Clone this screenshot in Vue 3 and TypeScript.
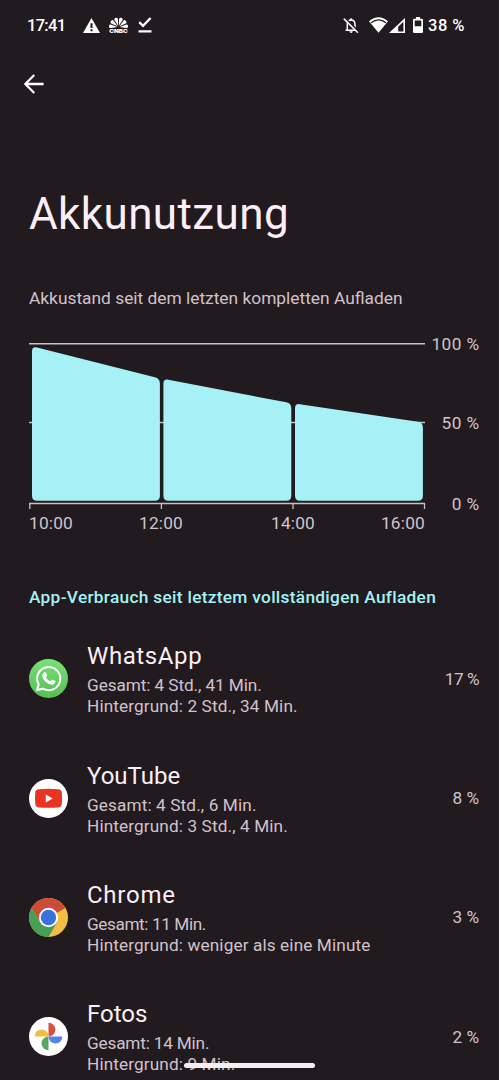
<script setup lang="ts">
interface AppUsage {
  id: string
  name: string
  total: string
  background: string
  share: string
}

const apps: AppUsage[] = [
  { id: 'whatsapp', name: 'WhatsApp', total: 'Gesamt: 4 Std., 41 Min.', background: 'Hintergrund: 2 Std., 34 Min.', share: '17 %' },
  { id: 'youtube', name: 'YouTube', total: 'Gesamt: 4 Std., 6 Min.', background: 'Hintergrund: 3 Std., 4 Min.', share: '8 %' },
  { id: 'chrome', name: 'Chrome', total: 'Gesamt: 11 Min.', background: 'Hintergrund: weniger als eine Minute', share: '3 %' },
  { id: 'fotos', name: 'Fotos', total: 'Gesamt: 14 Min.', background: 'Hintergrund: 9 Min.', share: '2 %' },
]

const hours = ['10:00', '12:00', '14:00', '16:00']
const levels = ['100 %', '50 %', '0 %']

interface Slot {
  x: number
  left: number
  right: number
}

const slots: Slot[] = [
  { x: 3, left: 6.3, right: 38.5 },
  { x: 134.4, left: 38.8, right: 63.3 },
  { x: 266, left: 63.4, right: 82.6 },
]
const slotWidth = 127.9
const base = 160.7

// Trapezoid with rounded corners; the top edge slopes from left to right.
function slotPath(s: Slot): string {
  const r = 5
  const x2 = s.x + slotWidth
  const slope = ((s.right - s.left) / slotWidth) * r
  return [
    `M${s.x} ${s.left + r}`,
    `Q${s.x} ${s.left} ${s.x + r} ${s.left + slope}`,
    `L${x2 - r} ${s.right - slope}`,
    `Q${x2} ${s.right} ${x2} ${s.right + r}`,
    `V${base - r}`,
    `Q${x2} ${base} ${x2 - r} ${base}`,
    `H${s.x + r}`,
    `Q${s.x} ${base} ${s.x} ${base - r}Z`,
  ].join('')
}

const feathers = [-85, -51, -17, 17, 51, 85]
</script>

<template>
  <main class="screen">
    <header class="status">
      <span class="clock">17:41</span>
      <svg class="warn" viewBox="0 0 17 15" width="17" height="15">
        <path fill="#fff" fill-rule="evenodd" d="M8.5 0 17 15H0ZM7.5 5.3v4.6h2V5.3Zm0 6v1.9h2v-1.9Z" />
      </svg>
      <svg class="peacock" viewBox="0 0 19 16" width="19" height="16">
        <path v-for="a in feathers" :key="a" fill="#fff" d="M9.5 8.8 7.8 2.6a1.75 1.75 0 1 1 3.4 0Z" :transform="`rotate(${a} 9.5 10)`" />
        <text x="9.5" y="15.6" text-anchor="middle" class="cnbc" textLength="18.5" lengthAdjust="spacingAndGlyphs">CNBC</text>
      </svg>
      <svg class="done" viewBox="0 0 14 16" width="14" height="16">
        <path fill="none" stroke="#fff" stroke-width="2.3" d="M1.2 5.2 5 8.8 12.6 1M.5 14.3h13" />
      </svg>
      <span class="grow"></span>
      <svg class="bell" viewBox="0 0 16 17" width="16" height="17">
        <g fill="none" stroke="#fff" stroke-width="1.5">
          <path d="M2.6 13.2h11.4M4.3 13V7.2Q4.3 3.2 8 3.1t4 4.1V13" />
          <path stroke-width="2" stroke="#211a1f" d="M2 1.2 15.2 14.5" />
          <path d="M.8 1.6 14.9 15.8" />
        </g>
        <path fill="#fff" d="M7.1 1.4h2v2h-2ZM6.4 14.3h3.4q-.3 1.7-1.7 1.7t-1.7-1.7Z" />
      </svg>
      <svg class="wifi" viewBox="0 0 19 16" width="19" height="16">
        <path fill="#fff" d="M9.5 15.8 0 4.3Q9.5-3.6 19 4.3Z" />
        <path fill="none" stroke="#211a1f" stroke-width="1.3" d="M2 5.800Q9.500-.1 17 5.800" />
      </svg>
      <svg class="signal" viewBox="0 0 16 15" width="16" height="15">
        <path fill="#fff" fill-rule="evenodd" d="M16 0v15H0ZM14.4 3.8 9.200 8.700v4.700h5.200Z" />
      </svg>
      <svg class="battery" viewBox="0 0 10 16" width="10" height="16">
        <path fill="#fff" fill-rule="evenodd" d="M3 0h4v1.8h1.800Q10 1.800 10 3v11.700q0 1.300-1.200 1.300H1.200Q0 16 0 14.700V3q0-1.200 1.200-1.200H3ZM1.700 3.600v5.600h6.600V3.600Z" />
      </svg>
      <span class="charge">38 %</span>
    </header>

    <nav class="toolbar">
      <svg viewBox="0 0 20 20" width="20" height="20">
        <path fill="none" stroke="#fff" stroke-width="2.3" d="M19.6 10H2M10.2 1 1.400 10l8.800 9" />
      </svg>
    </nav>

    <h1 class="title">Akkunutzung</h1>
    <p class="caption">Akkustand seit dem letzten kompletten Aufladen</p>

    <section class="chart">
      <div class="plot">
        <svg viewBox="0 0 397 170" width="397" height="170">
          <g fill="none" stroke="#c9c1bd" stroke-width="1.6">
            <path d="M0 3.8H396M0 82.5H396M0 163.5H396" />
            <path stroke-width="1.3" d="M.8 163v6M132.4 163v6M264 163v6M395.5 163v6" />
          </g>
          <path v-for="s in slots" :key="s.x" :d="slotPath(s)" fill="#a6f1f5" />
        </svg>
        <div class="hours">
          <span v-for="h in hours" :key="h">{{ h }}</span>
        </div>
      </div>
      <div class="levels">
        <span v-for="l in levels" :key="l">{{ l }}</span>
      </div>
    </section>

    <h2 class="section">App-Verbrauch seit letztem vollständigen Aufladen</h2>

    <ul class="apps">
      <li v-for="app in apps" :key="app.id" :class="['app', app.id]">
        <svg v-if="app.id === 'whatsapp'" class="icon" viewBox="0 0 40 40">
          <defs>
            <linearGradient id="wa" x1="0" y1="0" x2="0" y2="1">
              <stop offset="0" stop-color="#78e276" />
              <stop offset="1" stop-color="#57bd55" />
            </linearGradient>
          </defs>
          <circle cx="20" cy="20" r="20" fill="url(#wa)" />
          <path fill="none" stroke="#fff" stroke-width="2.1" stroke-linejoin="round" d="M8.3 31.9 9.9 26A11.9 11.9 0 1 1 14.3 30.4Z" />
          <path fill="#fff" d="M15.6 13.7c.6-.5 1.5-.4 1.8.3l1 2.4c.2.5.1.8-.2 1.2l-.9 1.1c1 2 2.5 3.3 4.6 4.2l1.2-1.4c.3-.4.7-.5 1.1-.3l2.4 1.2c.6.3.6.7.4 1.4-.5 1.9-2.1 2.6-3.6 2.5-4.5-.6-8.5-4.2-9.6-7.9-.4-1.7.4-3.7 1.8-4.7Z" />
        </svg>
        <svg v-else-if="app.id === 'youtube'" class="icon" viewBox="0 0 40 40">
          <circle cx="20" cy="20" r="20" fill="#fff" />
          <path fill="#e93323" d="M10 10.5Q20 9.7 30 10.5 33.4 10.8 33.7 14.2 34.2 20 33.7 25.5 33.4 28.9 30 29.2 20 30 10 29.2 6.6 28.9 6.4 25.5 5.9 20 6.4 14.2 6.6 10.8 10 10.5Z" />
          <path fill="#fff" d="M17.2 15.8v8.3l7.1-4.15Z" />
        </svg>
        <svg v-else-if="app.id === 'chrome'" class="icon" viewBox="0 0 40 40">
          <circle cx="20" cy="20" r="20" fill="#f2bf42" />
          <path fill="#cd4b3b" d="M20 20 2.7 10A20 20 0 0 1 37.3 10Z" />
          <path fill="#cd4b3b" d="M20 10H37.3L20 20 11.3 25 2.7 10Z" />
          <path fill="#469f54" d="M2.7 10A20 20 0 0 0 20 40L28.7 25H20L11.34 25Z" />
          <circle cx="20" cy="20" r="9.9" fill="#fff" />
          <circle cx="20" cy="20" r="7.9" fill="#3871e0" />
        </svg>
        <svg v-else class="icon" viewBox="0 0 40 40">
          <circle cx="20" cy="20" r="20" fill="#fff" />
          <path fill="#d95040" d="M20 5.8a7.1 7.1 0 0 1 0 14.2Z" />
          <path fill="#5383ec" d="M34.2 20a7.1 7.1 0 0 1-14.2 0Z" />
          <path fill="#58a55c" d="M20 34.2a7.1 7.1 0 0 1 0-14.2Z" />
          <path fill="#f2bd42" d="M5.8 20a7.1 7.1 0 0 1 14.2 0Z" />
        </svg>
        <div class="info">
          <h3 class="name">{{ app.name }}</h3>
          <p class="total">{{ app.total }}</p>
          <p>{{ app.background }}</p>
        </div>
        <span class="share">{{ app.share }}</span>
      </li>
    </ul>

    <div class="handle"></div>
  </main>
</template>

<style>
html,
body {
  background: #211a1f;
}
</style>

<style scoped>
.screen {
  position: relative;
  width: 499px;
  height: 1080px;
  overflow: hidden;
  display: flex;
  flex-direction: column;
  background: #211a1f;
  color: #d2c2cb;
  font-family: Roboto, Inter, "Liberation Sans", sans-serif;
  font-size: 17.2px;
}
h1, h2, h3, p, ul {
  margin: 0;
  padding: 0;
  font-weight: 400;
}
.status {
  height: 50px;
  flex: none;
  display: flex;
  align-items: center;
  padding: 0 34px 0 27px;
  color: #fff;
}
.status svg {
  flex: none;
}
.clock,
.charge {
  font-size: 16.5px;
  font-weight: 500;
  white-space: nowrap;
}
.clock {
  width: 56px;
  letter-spacing: -0.7px;
}
.peacock { margin-left: 9px; }
.done { margin-left: 10px; }
.cnbc {
  font: 900 4.6px Inter, sans-serif;
  fill: #fff;
}
.grow { flex: 1; }
.bell { margin-right: 1px; }
.wifi { margin-left: 9px; }
.signal { margin-left: 1px; }
.battery { margin-left: 8px; }
.charge {
  width: 37px;
  margin-left: 5px;
  letter-spacing: 0.5px;
}
.toolbar {
  height: 68px;
  flex: none;
  display: flex;
  align-items: center;
  padding-left: 24px;
}
.title {
  margin-top: 66px;
  padding-left: 29px;
  height: 60px;
  line-height: 60px;
  flex: none;
  color: #fbeef6;
  font-size: 44px;
  letter-spacing: 0.4px;
}
.caption {
  margin-top: 42px;
  padding-left: 29px;
  height: 24px;
  line-height: 24px;
  flex: none;
  font-size: 17.35px;
}
.chart {
  margin-top: 30px;
  padding: 0 19.5px 0 29px;
  height: 194px;
  flex: none;
  display: flex;
  justify-content: space-between;
}
.plot svg {
  display: block;
}
.hours {
  width: 396px;
  margin-top: 3px;
  display: grid;
  grid-template-columns: 1fr 2fr 2fr 1fr;
  text-align: center;
  line-height: 20px;
  font-size: 17.3px;
  letter-spacing: 0.2px;
}
.hours span:first-child {
  text-align: left;
}
.hours span:last-child {
  text-align: right;
}
.levels {
  height: 180px;
  margin-top: -6px;
  display: flex;
  flex-direction: column;
  text-align: right;
  line-height: 20px;
  font-size: 17.3px;
  letter-spacing: 0.4px;
}
.levels span + span {
  margin-top: 59px;
}
.levels span:last-child {
  margin-top: 61px;
}
.section {
  margin-top: 51px;
  padding-left: 29px;
  height: 24px;
  line-height: 24px;
  flex: none;
  color: #a6f1f5;
  font-size: 17.3px;
  font-weight: 500;
  letter-spacing: 0.3px;
}
.apps {
  margin-top: 10px;
  list-style: none;
}
.app {
  height: 119.4px;
  display: flex;
  align-items: center;
  padding: 0 20px 0 29px;
}
.icon {
  width: 39px;
  height: 39px;
  flex: none;
}
.info {
  flex: 1;
  margin-left: 19px;
  letter-spacing: 0.12px;
}
.name {
  color: #fbeef6;
  font-size: 24px;
  line-height: 32px;
  margin-bottom: 3px;
  letter-spacing: 0;
}
.whatsapp .name { letter-spacing: 0.6px; }
.chrome .name { letter-spacing: 0.75px; }
.whatsapp .total { letter-spacing: -0.08px; }
.chrome .total { letter-spacing: -0.4px; }
.fotos .total { letter-spacing: -0.18px; }
.info p {
  line-height: 21px;
}
.whatsapp .share { letter-spacing: -0.5px; }
.handle {
  position: absolute;
  left: 184px;
  top: 1063px;
  width: 131px;
  height: 5px;
  border-radius: 3px;
  background: #f1eff0;
}
</style>
